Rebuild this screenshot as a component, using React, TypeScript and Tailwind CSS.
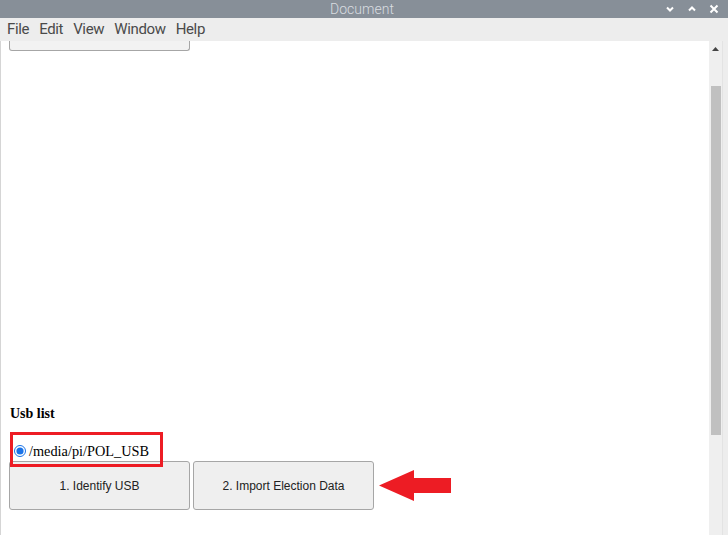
import { useState } from 'react';

const menus = ['File', 'Edit', 'View', 'Window', 'Help'];

const App = () => {
  const [selected, setSelected] = useState(true);

  return (
    <div className="w-[728px] h-[535px] overflow-hidden flex flex-col bg-white font-['Liberation_Sans',Arial,sans-serif]">
      {/* Title bar */}
      <div className="h-[18px] shrink-0 bg-[#878f98] relative flex items-center justify-center">
        <span className="text-[14px] leading-none text-[#d9dde0] font-['Roboto',sans-serif] font-light ml-[-4px]">Document</span>
        <div className="absolute right-[9px] top-0 h-full flex items-center gap-[12px] text-white">
          <svg width="10" height="8" viewBox="0 0 10 8"><path d="M2 2.5 L5 5.5 L8 2.5" fill="none" stroke="currentColor" strokeWidth="2" /></svg>
          <svg width="10" height="8" viewBox="0 0 10 8"><path d="M2 5.5 L5 2.5 L8 5.5" fill="none" stroke="currentColor" strokeWidth="2" /></svg>
          <svg width="10" height="10" viewBox="0 0 10 10"><path d="M1.5 1.5 L8.5 8.5 M8.5 1.5 L1.5 8.5" fill="none" stroke="currentColor" strokeWidth="2" /></svg>
        </div>
      </div>

      {/* Menu bar */}
      <div className="h-[23px] shrink-0 bg-[#ededed] flex items-center pl-[2px]">
        {menus.map(m => (
          <span key={m} className="px-[5px] text-[15px] text-[#4a4a4a] font-['Roboto',sans-serif] tracking-[-0.35px]">{m}</span>
        ))}
      </div>

      {/* Content */}
      <div className="flex-1 flex min-h-0">
        <div className="flex-1 flex flex-col border-l border-l-[#d5d5d5] pl-[8px] min-w-0">
          <div className="w-[181px] h-[10px] shrink-0 bg-[#f2f2f2] border border-t-0 border-[#a6a6a6] rounded-b-[3px]" />

          <div className="flex-1" />

          <h3 className="font-['Liberation_Serif',serif] font-bold text-[14px] text-black ml-[1px] mb-[8px]">Usb list</h3>

          <div className="relative z-10 w-[153px] h-[35px] border-[3px] border-[#ed1c24] flex items-center pt-[4px] pl-[1px] ml-[1px]">
            <label className="flex items-center gap-[3px] font-['Liberation_Serif',serif] text-[14.3px] leading-none text-black">
              <input
                type="radio"
                checked={selected}
                onChange={() => setSelected(true)}
                className="w-[12px] h-[12px] m-0 accent-[#1a73e8]"
              />
              /media/pi/POL_USB
            </label>
          </div>

          <div className="flex items-center gap-[3px] mt-[-6px] mb-[25px]">
            <button className="w-[181px] h-[49px] bg-[#efefef] border border-[#a6a6a6] rounded-[3px] text-[12px] text-[#222]">
              1. Identify USB
            </button>
            <button className="w-[181px] h-[49px] bg-[#efefef] border border-[#a6a6a6] rounded-[3px] text-[12px] text-[#222]">
              2. Import Election Data
            </button>
            <svg width="72" height="31" viewBox="0 0 72 31" className="ml-[2px]">
              <path d="M0 15.5 L35 0 L35 8 L72 8 L72 23 L35 23 L35 31 Z" fill="#ed1c24" />
            </svg>
          </div>
        </div>

        {/* Scrollbar */}
        <div className="w-[13px] shrink-0 bg-[#efefef] flex flex-col items-center pt-[6px]">
          <svg width="7" height="4" viewBox="0 0 7 4"><path d="M0 4 L3.5 0 L7 4 Z" fill="#444" /></svg>
          <div className="w-[10px] h-[349px] bg-[#c0c0c0] mt-[35px]" />
        </div>
        <div className="w-[6px] shrink-0 bg-[#ededed] border-l border-[#e3e3e3]" />
      </div>
    </div>
  );
};

export default App;
